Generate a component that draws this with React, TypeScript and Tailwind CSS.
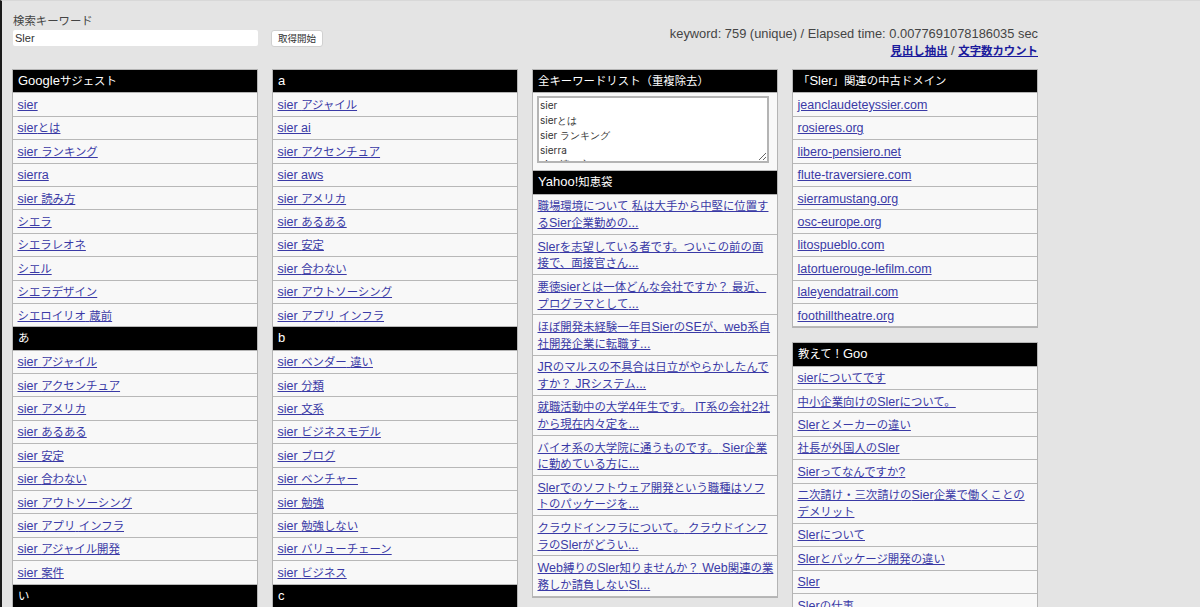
const font = { fontFamily: '"Liberation Sans","Noto Sans CJK JP",sans-serif' };

/* The reference draws CJK glyphs smaller than its Latin glyphs, so each CJK run gets its own size. */
function Mixed({ t }: { t: string }) {
  return (
    <>
      {t.split(/([\u3000-\u9fff\uff00-\uffef]+)/).map((part, i) =>
        i % 2 === 1 ? (
          <span key={i} className="text-[11.4px]">{part}</span>
        ) : (
          part
        ),
      )}
    </>
  );
}

function Head({ t }: { t: string }) {
  return (
    <div className="bg-black text-white h-[23.4px] leading-[22px] px-[5px] text-[13px] border-b border-[#b4b4b4]">
      <Mixed t={t} />
    </div>
  );
}

function Row({ t }: { t: string }) {
  return (
    <div className="bg-[#f8f8f8] border-b border-[#b8b8b8] pl-[4.5px] pr-[3.5px] pt-[3.6px] pb-[2px] leading-[16.8px] text-[12.5px]">
      <a href="#" className="text-[#3a3aa6] underline">
        <Mixed t={t} />
      </a>
    </div>
  );
}

function Group({ title, rows }: { title: string; rows: string[] }) {
  return (
    <>
      <Head t={title} />
      {rows.map((r, i) => (
        <Row key={i} t={r} />
      ))}
    </>
  );
}

const google = ["sier", "sierとは", "sier ランキング", "sierra", "sier 読み方", "シエラ", "シエラレオネ", "シエル", "シエラデザイン", "シエロイリオ 蔵前"];
const a1 = ["sier アジャイル", "sier アクセンチュア", "sier アメリカ", "sier あるある", "sier 安定", "sier 合わない", "sier アウトソーシング", "sier アプリ インフラ", "sier アジャイル開発", "sier 案件"];
const a2 = ["sier アジャイル", "sier ai", "sier アクセンチュア", "sier aws", "sier アメリカ", "sier あるある", "sier 安定", "sier 合わない", "sier アウトソーシング", "sier アプリ インフラ"];
const b = ["sier ベンダー 違い", "sier 分類", "sier 文系", "sier ビジネスモデル", "sier ブログ", "sier ベンチャー", "sier 勉強", "sier 勉強しない", "sier バリューチェーン", "sier ビジネス"];
const yahoo = [
  "職場環境について 私は大手から中堅に位置するSier企業勤めの...",
  "Slerを志望している者です。ついこの前の面接で、面接官さん...",
  "悪徳sierとは一体どんな会社ですか？ 最近、プログラマとして...",
  "ほぼ開発未経験一年目SierのSEが、web系自社開発企業に転職す...",
  "JRのマルスの不具合は日立がやらかしたんですか？ JRシステム...",
  "就職活動中の大学4年生です。 IT系の会社2社から現在内々定を...",
  "バイオ系の大学院に通うものです。 Sier企業に勤めている方に...",
  "Slerでのソフトウェア開発という職種はソフトのパッケージを...",
  "クラウドインフラについて。 クラウドインフラのSlerがどうい...",
  "Web縛りのSler知りませんか？ Web関連の業務しか請負しないSl...",
];
const domains = ["jeanclaudeteyssier.com", "rosieres.org", "libero-pensiero.net", "flute-traversiere.com", "sierramustang.org", "osc-europe.org", "litospueblo.com", "latortuerouge-lefilm.com", "laleyendatrail.com", "foothilltheatre.org"];
const goo = ["sierについてです", "中小企業向けのSlerについて。", "Slerとメーカーの違い", "社長が外国人のSler", "Sierってなんですか?", "二次請け・三次請けのSier企業で働くことのデメリット", "Slerについて", "Slerとパッケージ開発の違い", "Sler", "Slerの仕事"];

const panel = "border border-[#b4b4b4]";

export default function App() {
  return (
    <div style={font} className="h-[607px] overflow-hidden bg-[#e4e4e4] text-[#333] border-t border-[#d8d8d8] border-l-2 border-l-[#1a1a1a] pl-[10px]">
      <div className="w-[1026px] flex justify-between h-[68px]">
        <div className="pt-[13px] flex gap-[13px]">
          <div className="w-[246px] pl-[1px]">
            <div className="text-[11.4px] leading-[14px] text-[#444]">検索キーワード</div>
            <input
              readOnly
              value="Sler"
              className="mt-[2px] block w-full h-[16px] bg-white rounded-[2px] px-[2px] pt-[1px] text-[11px] text-[#333] outline-none"
            />
          </div>
          <button className="mt-[16px] w-[52px] h-[17px] bg-white rounded-[3px] border border-[#d0d0d0] text-[9.5px] leading-none text-[#333]">取得開始</button>
        </div>
        <div className="pt-[24px] text-right text-[12.87px] leading-[17px] text-[#444]">
          <div>keyword: 759 (unique) / Elapsed time: 0.0077691078186035 sec</div>
          <div>
            <a href="#" className="font-bold text-[#1a1a9c] underline"><Mixed t="見出し抽出" /></a> / <a href="#" className="font-bold text-[#1a1a9c] underline"><Mixed t="文字数カウント" /></a>
          </div>
        </div>
      </div>
      <div className="flex gap-[14px] items-start">
        <div className={`w-[246px] ${panel}`}>
          <Group title="Googleサジェスト" rows={google} />
          <Group title="あ" rows={a1} />
          <Group title="い" rows={["sier 一覧"]} />
        </div>
        <div className={`w-[246px] ${panel}`}>
          <Group title="a" rows={a2} />
          <Group title="b" rows={b} />
          <Group title="c" rows={["sier コンサル"]} />
        </div>
        <div className={`w-[246px] ${panel}`}>
          <Head t="全キーワードリスト（重複除去）" />
          <div className="bg-[#f8f8f8] border-b border-[#b8b8b8] h-[78px] px-[4px] pt-[3px]">
            <textarea
              readOnly
              className="block w-[232px] h-[67px] bg-white border-2 border-[#b4b4b4] px-[1px] text-[10px] leading-[14.7px] text-[#333] overflow-hidden outline-none font-[Inter]"
              value={"sier\nsierとは\nsier ランキング\nsierra\nsier 読み方"}
            />
          </div>
          <Group title="Yahoo!知恵袋" rows={yahoo} />
        </div>
        <div className="w-[246px] flex flex-col gap-[14px]">
          <div className={panel}>
            <Group title="「Sler」関連の中古ドメイン" rows={domains} />
          </div>
          <div className={panel}>
            <Group title="教えて！Goo" rows={goo} />
          </div>
        </div>
      </div>
    </div>
  );
}
